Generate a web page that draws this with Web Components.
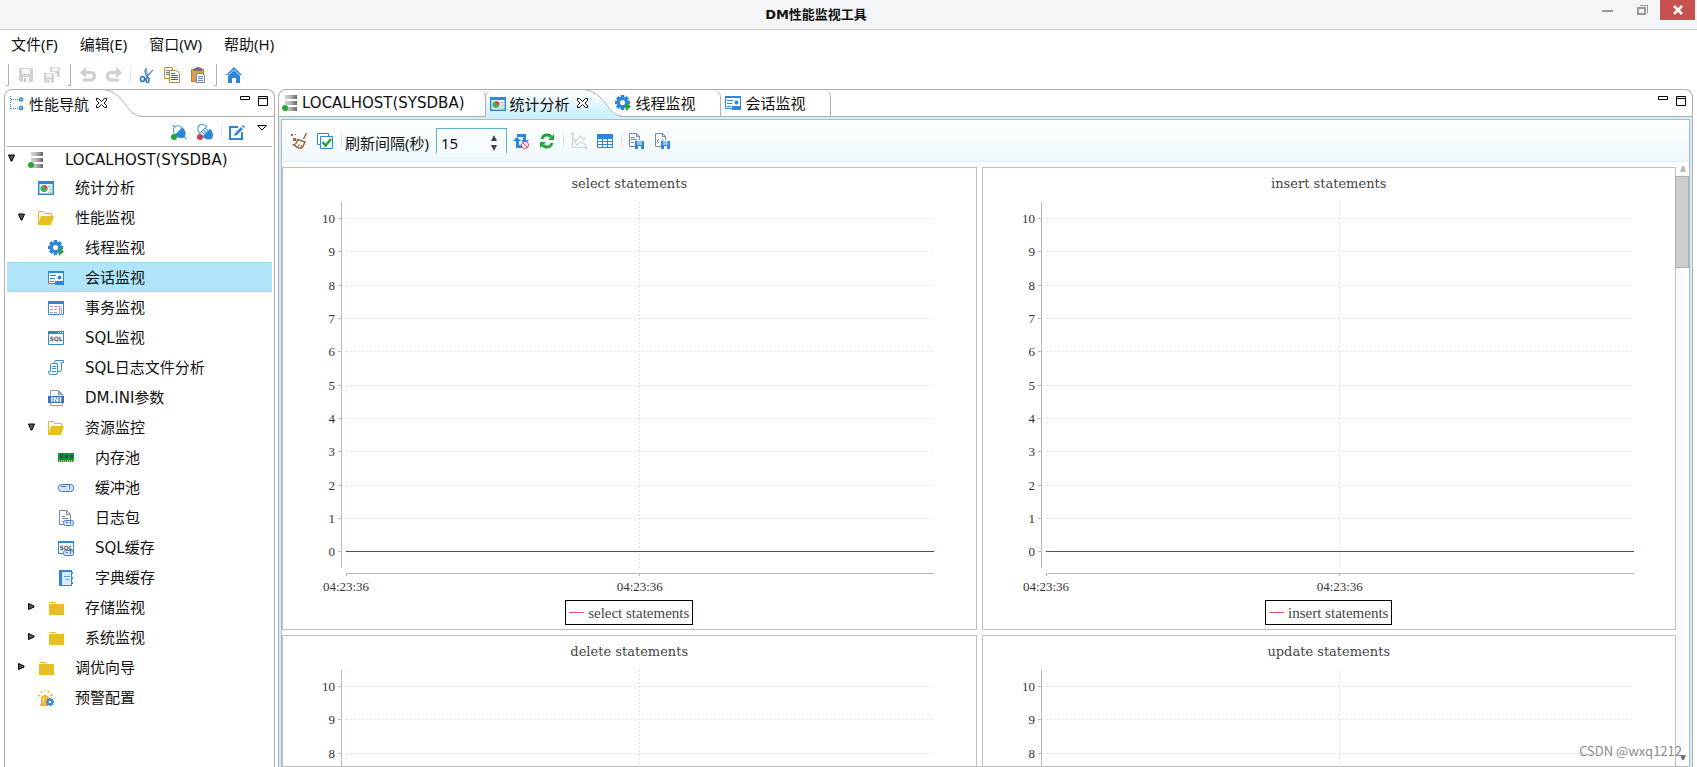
<!DOCTYPE html>
<html lang="zh-CN">
<head>
<meta charset="utf-8">
<title>DM性能监视工具</title>
<style>
  html, body { margin: 0; height: 100%; }
  body {
    font: 15px/30px "Noto Sans", "Noto Sans CJK SC", sans-serif;
    color: #111; background: #fff; overflow: hidden;
    --latin: "DejaVu Sans", "Noto Sans CJK SC", sans-serif;
    --edge: #b0b0b0; --blue: #2f86d8; --frame: #d0effa;
  }
</style>
</head>
<body>
<dm-app></dm-app>
<script>
const RESET = `
  button { font: inherit; color: inherit; background: none; border: 0; padding: 0; margin: 0; display: flex; align-items: center; }
  * { box-sizing: border-box; }
  svg { display: block; }
`;
function define(name, css, html, ready) {
  const t = document.createElement('template');
  customElements.define(name, class extends HTMLElement {
    connectedCallback() {
      if (this.shadowRoot) return;
      const root = this.attachShadow({ mode: 'open' });
      t.innerHTML = `<style>${RESET}${css}</style>${typeof html === 'function' ? html(this) : html}`;
      root.append(t.content.cloneNode(true));
      if (ready) ready(this, root);
    }
  });
}

const server = `<defs><linearGradient id="m"><stop offset="0" stop-color="#d4d4d4"/><stop offset=".4" stop-color="#bbb"/><stop offset="1" stop-color="#666"/></linearGradient></defs>
  <path fill="url(#m)" d="M3 0h12v4H3zM3 6h12v4H3zM3 12h12v4H3z"/><circle cx="3" cy="13" r="3" fill="#23a638"/>`;
const floppy = (x, y, s) => `<g transform="translate(${x} ${y}) scale(${s})"><path fill="#d2d2d2" d="M0 0h14v14H2L0 12z"/><path fill="#f6f6f6" d="M3 1h8v5H3zM4 9h6v5H4z"/><path fill="#c6c6c6" d="M5 10h2v4H5z"/></g>`;
const gear = (cx, cy, r, c) => {
  let s = '';
  for (let i = 0; i < 8; i++) s += `<rect x="${cx - r * .24}" y="${cy - r}" width="${r * .48}" height="${r}" fill="${c}" transform="rotate(${i * 45} ${cx} ${cy})"/>`;
  return s + `<circle cx="${cx}" cy="${cy}" r="${r * .76}" fill="${c}"/><circle cx="${cx}" cy="${cy}" r="${r * .34}" fill="#fff"/>`;
};
const plug = (dot, cut) => `<g transform="translate(8.500 8) rotate(45)">
  <path stroke="#4893da" d="M-10 0h20"/>
  <path fill="#fff" stroke="#4893da" d="M${cut ? -3 : -1}-5A6 5 0 0 0 ${cut ? -3 : -1} 5z"/>
  <path fill="#2f86d8" d="M${cut ? 1 : -1}-5.500A8 5.500 0 0 1 ${cut ? 1 : -1} 5.500z"/>
  ${cut ? '<path stroke="#4893da" d="M-3-2.500h4M-3 2.500h4"/>' : ''}</g><circle cx="3" cy="13" r="3" fill="${dot}"/>`;
const capsule = (x, y, w, h) => `<rect x="${x}" y="${y}" width="${w}" height="${h}" rx="${h / 2.600}" fill="#cfe3ff" stroke="#4b7cc0"/>`;
const docSave = inner => `<path fill="#fff" stroke="#7488ab" d="M6 13.500H.5v-13h7l3 3V7"/><path fill="none" stroke="#7488ab" d="M7.500.5v3h3"/>${inner}<path fill="#2f86d8" d="M6 8h9v8H6z"/><path fill="#8cc4ff" d="M8 8h5v4H8z"/><path fill="#fff" d="M9 13h3v3H9z"/>`;
const win = `<path fill="#fff" stroke="#2f86d8" d="M.5 1.500h15v13H.5z"/><path fill="#2f86d8" d="M0 1h16v3H0z"/>`;
const folder = `<path fill="#fff" stroke="#e5b61f" d="M1.500 2.500h6l1 2"/><path fill="#e7be26" d="M1 4h15v11H1z"/>`;

const ICONS = {
  server,
  stats: `<path fill="#fff" stroke="#2f86d8" stroke-width="1.500" d="M.75 1.750h14.500v12.500H.75z"/><path fill="#2f86d8" d="M0 1h16v3H0z"/><circle cx="6" cy="8.500" r="3.600" fill="#3cb35b"/><path fill="#df3e5c" d="M6 8.500V5a3.500 3.500 0 0 1 3.500 3.500z"/><path stroke="#a5dcae" stroke-width="2" d="M10 6.500h4M11 9.500h3M10 12.500h4"/>`,
  open: `<path fill="#fff" stroke="#e5b61f" d="M.5 14V1.500h5l1 2h7V7"/><path fill="#e7be26" d="M3 6h13l-3 9H0z"/>`,
  folder,
  gear: gear(7.500, 7.500, 7.500, '#2f86d8') + `<path fill="#23a638" d="M11 7l5 4.500-5 4.500z"/>`,
  session: `<path fill="#fff" stroke="#2f86d8" d="M.5 1.500h15v12H.5z"/><path fill="#2f86d8" d="M0 1h16v2H0zM7 11h9v4H7z"/><circle cx="11.500" cy="7.500" r="2" fill="#2f86d8"/><path stroke="#2f86d8" d="M2 5.500h6M2 8.500h5M2 11.500h4"/>`,
  trans: `${win}<path stroke="#c38bd3" stroke-dasharray="3 1" d="M2 6.500h12M2 9.500h8M2 12.500h8"/><path fill="#fff" stroke="#c48bd0" d="M11.500 8.500h2v6h-2z"/>`,
  sql: `<path fill="#fff" stroke="#2f86d8" d="M.5 1.500h15v13H.5z"/><path fill="#2f86d8" d="M0 1h16v3H0z"/><path stroke="#fff" stroke-dasharray="1 1" d="M10 2.500h5"/><text x="8" y="11" text-anchor="middle" font-family="DejaVu Sans" font-weight="bold" font-size="6" fill="#555">SQL</text>`,
  sqllog: `<path fill="#fff" stroke="#3c8bd2" d="M6.500 11.500v-10q0-1 1-1h8v2h-2v7q0 2-2 2z"/><path fill="#fff" stroke="#3c8bd2" d="M2.500 11.500v-7q0-1 1-1h6v9q0 2-2 2h-5q-2 0-2-2v-1z"/><path stroke="#3c8bd2" d="M4 6.500h4M4 8.500h4M4 11.500h4"/>`,
  ini: `<path fill="#fff" stroke="#8b9dbc" d="M2.500 15.500V.5h8l4 4v11z"/><path fill="#8b9dbc" d="M10 0v5h5z"/><path fill="#3c71b2" d="M0 6h16v7H0z"/><text x="8" y="12" text-anchor="middle" font-family="DejaVu Sans" font-weight="bold" font-size="7" fill="#fff">INI</text>`,
  ram: `<path fill="#0a9244" d="M0 3h16v9H0z"/><path fill="#444" d="M2 5h3v3H2zM7 5h3v3H7zM12 5h3v3h-3z"/><path stroke="#d6c53a" stroke-width="2" stroke-dasharray="1 1" d="M1 11h15"/>`,
  buffer: capsule(.5, 4.500, 15, 7) + `<path stroke="#4b7cc0" d="M3 6.500h5M11.500 5v4"/>`,
  logpack: `<path fill="#fff" stroke="#7488ab" d="M1.500 15V.5h7l4 4v6M1.500 14.500H6M8.500.5v4h4"/><path stroke="#7488ab" d="M4 6.500h3M4 8.500h6M4 11.500h3"/>${capsule(5.500, 10.500, 10, 5)}<path stroke="#4b7cc0" d="M8 12.500h2M12.500 11v3"/>`,
  sqlcache: `<path fill="#fff" stroke="#2f86d8" d="M.5 1.500h15v12H.5z"/><path fill="#2f86d8" d="M0 1h16v2H0z"/><text x="8" y="10" text-anchor="middle" font-family="DejaVu Sans" font-weight="bold" font-size="6" fill="#555">SQL</text>${capsule(5.500, 10.500, 10, 5)}<path stroke="#4b7cc0" d="M8 12.500h2M12.500 11v3"/>`,
  dict: `<path fill="#d9eaff" stroke="#2f86d8" d="M1.500 1.500h12v14h-12z"/><path fill="#2f86d8" d="M1 1h3v15H1zM1 0h13v2H1zM14 2h1v2h-1zM14 7h1v2h-1zM14 12h1v2h-1z"/><path stroke="#5c9fe0" d="M6 6.500h6M8 9.500h3"/>`,
  alarm: `<path fill="#f8b52c" d="M3 14V9q0-4 4-4t4 4v5zM2 14h8v2H2z"/><path stroke="#f8b52c" stroke-width="1.500" d="M4 3L3 1M10 3l1-2M2 6L0 5M12 6l3-1.500M7 0v1"/><path stroke="#fff" d="M5.500 13V9q0-1 1-1.500"/>${gear(12, 12, 4, '#2f86d8')}`,
  nav: `<path fill="none" stroke="#2f86d8" stroke-dasharray="1 1" d="M1.500 0v14M2 3.500h7M2 12.500h7"/><path fill="#fff" stroke="#2f86d8" stroke-width="1.500" d="M12 2a1.500 1.500 0 1 1 0 3 1.500 1.500 0 0 1 0-3zM12 10.500a1.500 1.500 0 1 1 0 3 1.500 1.500 0 0 1 0-3z"/>`,
  save: floppy(1, 1, 1),
  saveall: floppy(6, 0, .7) + `<path fill="#fff" d="M0 5h11v11H0z"/>` + floppy(0, 6, .7),
  undo: `<path fill="none" stroke="#cfcfcf" stroke-width="3" d="M3 5.500h8q3.500 0 3.500 3.500T11 13H3"/><path fill="#cfcfcf" d="M0 5.500L6 0v11z"/>`,
  redo: `<path fill="none" stroke="#cfcfcf" stroke-width="3" d="M13 5.500H5Q1.500 5.500 1.500 9T5 13h8"/><path fill="#cfcfcf" d="M16 5.500L10 0v11z"/>`,
  cut: `<path fill="#9dbdd9" stroke="#4b80b4" stroke-width=".8" d="M8 1l1.500 8H8L6.500 4zM15 3L9.500 10l-1-1 5-5z"/><path fill="none" stroke="#3077b8" stroke-width="1.600" d="M4.500 9.500a2 2.500 0 1 1 0 5 2 2.500 0 0 1 0-5zM9.500 10.500a1.500 2.500 0 1 1 0 5 1.500 2.500 0 0 1 0-5z"/>`,
  copy: `<path fill="#fff8df" stroke="#b28c3c" d="M.5.500h8v11h-8z"/><path stroke="#59789c" d="M2 3.500h3M2 5.500h3M2 7.500h3"/><path fill="#fff" stroke="#b28c3c" d="M5.500 3.500h7l3 3v9h-10z"/><path stroke="#3e5f8d" d="M7 6.500h4M7 8.500h7M7 10.500h7M7 12.500h7"/>`,
  paste: `<path fill="#dca04a" stroke="#b77a2a" d="M1.500 2.500h12v12h-12z"/><path fill="#6b7583" d="M4 1h2l1-1h2l1 1h2v3H4z"/><path fill="#fff" stroke="#6f8aa8" d="M6.500 6.500h6l2 2v7h-8z"/><path stroke="#6f8aa8" d="M8 9.500h5M8 11.500h5M8 13.500h5"/>`,
  home: `<path fill="#2f86d8" d="M8 0l8 8H14v8h-4v-5H6v5H2V8H0z"/><path stroke="#fff" stroke-width=".8" fill="none" d="M1.500 9L8 2.800 14.500 9"/>`,
  connect: plug('#23a638'),
  disconnect: plug('#cf3a4e', true),
  edit: `<path fill="none" stroke="#2f86d8" stroke-width="2" d="M9 3H1v12h12V8"/><path fill="#2f86d8" d="M5 12l1-3 6-6 2 2-6 6zM13 2l1-1 2 2-1 1z"/>`,
  broom: `<path fill="none" stroke="#9b6a3f" stroke-width="1.500" d="M15.500 0L12.500 6M6.500 6.500L14 9l-3 6H7.500L2.500 12Q6 11 6.500 6.500z"/><path stroke="#9b6a3f" d="M6.500 14l2-3M9.500 15l1.500-3"/><path fill="#9b6a3f" d="M0 1h2v2H0zM4 1h1v1H4zM2 5h3v3H2z"/>`,
  check: `<path fill="#fff" stroke="#2f86d8" d="M.5.500h11v11H.5z"/><path fill="#fff" stroke="#2f86d8" d="M3.500 3.500h12v12h-12z"/><path fill="none" stroke="#23a638" stroke-width="2.500" d="M5.500 9l3 3.500L14 6"/>`,
  norefresh: `<path fill="#2f86d8" d="M4 1h9v6h3l-4 4-4-4h2V4H4zM0 8l4-4 4 4H6v4h4v3H3V8z"/><circle cx="12" cy="12" r="3.500" fill="#fff" stroke="#df3e5c"/><path stroke="#df3e5c" d="M9.500 9.500l5 5"/>`,
  refresh: `<path fill="none" stroke="#23a638" stroke-width="3" d="M3 6q1-4 5-4 3 0 4 2M13 10q-1 4-5 4-3 0-4-2"/><path fill="#23a638" d="M15 1v6H9zM1 15V9h6z"/>`,
  chart: `<path fill="none" stroke="#d0d5d8" stroke-width="1.200" d="M1.500 0v14.500H16M2 5l3 3 4-5 3 4 3-2M3 8l3 4 4-3 5 3M0 2l1.500-2L3 2M14 13l2 1.500-2 1.500"/>`,
  table: `<path fill="#fff" stroke="#2f86d8" d="M.5 1.500h15v13H.5z"/><path fill="#2f86d8" d="M0 1h16v5H0z"/><path stroke="#2f86d8" d="M0 8.500h16M0 11.500h16M5.500 5v10M10.500 5v10"/>`,
  savedoc: docSave(`<path stroke="#7488ab" d="M2 4.500h4M2 6.500h6M2 9.500h3"/>`),
  savexml: docSave(`<path fill="none" stroke="#7488ab" d="M4 6L2 8l2 2M7 6l1.500 1.500"/>`)
};

define('dm-icon', `:host { display: block; flex: none; width: 16px; height: 16px; } svg { overflow: visible; }`,
  el => `<svg width="16" height="16" viewBox="0 0 16 16" fill="none" aria-hidden="true">${ICONS[el.getAttribute('name')]}</svg>`);

define('dm-tool', `:host { display: block; flex: none; }`,
  el => `<button type="button" aria-label="${el.getAttribute('label')}" ${el.hasAttribute('off') ? 'disabled' : ''}><dm-icon name="${el.getAttribute('icon')}"></dm-icon></button>`);

define('dm-sep', `:host { display: block; flex: none; width: 1px; height: 21px; margin: 0 -3px 0 -2px; background: linear-gradient(#fff, #d4d4d4, #fff); }`, '');
define('dm-handle', `:host { display: block; flex: none; width: 3px; height: 22px; margin: 0 -1px 0 -2px; border: solid var(--edge); border-width: 0 1px 1px 0; }`, '');

define('dm-titlebar', `
  :host { display: flex; height: 30px; background: #f4f5f7; border-bottom: 1px solid #c8c8c8; }
  h1 { flex: 1; margin: 0; padding-left: 42px; font: bold 13px/30px var(--latin); text-align: center; }
  .controls { display: flex; align-items: flex-start; padding-right: 2px; }
  button { width: 35px; height: 20px; justify-content: center; }
  .close { background: #c75050; }`,
  `<h1>DM性能监视工具</h1>
  <div class="controls">
    <button type="button" aria-label="最小化"><svg width="11" height="10"><path fill="#999" d="M0 5h11v2H0z"/></svg></button>
    <button type="button" aria-label="还原"><svg width="11" height="10" fill="none" stroke="#999"><path stroke-width="2" d="M1 3h7v6H1z"/><path d="M3 .5h7.500V8"/></svg></button>
    <button type="button" class="close" aria-label="关闭"><svg width="10" height="10" stroke="#fff" stroke-width="2.500"><path d="M1 1l8 8M9 1l-8 8"/></svg></button>
  </div>`);

define('dm-menubar', `
  :host { display: flex; gap: 22px; padding: 0 11px 2px; height: 30px; }`,
  ['文件(F)', '编辑(E)', '窗口(W)', '帮助(H)'].map(t => `<button type="button">${t}</button>`).join(''));

define('dm-main-toolbar', `
  :host { display: flex; align-items: center; gap: 10px; padding: 0 8px; height: 29px; }`,
  `<dm-handle></dm-handle><dm-tool icon="save" label="保存" off></dm-tool><dm-tool icon="saveall" label="全部保存" off></dm-tool>
  <dm-handle></dm-handle><dm-tool icon="undo" label="撤销" off></dm-tool><dm-tool icon="redo" label="重做" off></dm-tool>
  <dm-sep></dm-sep><dm-tool icon="cut" label="剪切"></dm-tool><dm-tool icon="copy" label="复制"></dm-tool><dm-tool icon="paste" label="粘贴"></dm-tool>
  <dm-handle></dm-handle><dm-tool icon="home" label="主页"></dm-tool>`);

define('dm-tab', `
  :host { display: flex; flex: none; height: 27px; position: relative; }
  button.tab { gap: 5px; height: 26px; padding: 0 24px 0 4px; border-right: 1px solid var(--edge); border-top-right-radius: 7px; white-space: nowrap; }
  :host([latin]) button.tab { gap: 4px; font: 15px/26px var(--latin); padding: 0 20px 0 3px; }
  :host([active]) { margin-right: -14px; }
  :host([active]) button.tab { gap: 4px; height: 27px; padding: 0 7px 0 4px; border: 0; border-radius: 0; background: var(--tab-fill); }
  :host([active][edge]) button.tab { border-left: 1px solid var(--edge); border-top-left-radius: 7px; margin-left: -1px; }
  .x { height: 27px; padding-bottom: 2px; background: var(--tab-fill); z-index: 1; width: 6px; overflow: visible; }
  .x svg { flex: none; }
  .curve { overflow: hidden; }`,
  el => `<button type="button" class="tab" role="tab"><dm-icon name="${el.getAttribute('icon')}"></dm-icon><slot></slot></button>` +
    (el.hasAttribute('active') ? `<button type="button" class="x" aria-label="关闭"><svg width="11" height="10" fill="#fff" stroke="#111"><path d="M.5.500h2l3 3 3-3h2v2l-2.500 2.500 2.500 2.500v2h-2l-3-3-3 3h-2v-2L3 5 .5 2.500z"/></svg></button>
    <svg class="curve" width="42" height="27"><defs><linearGradient id="f" x2="0" y2="1"><stop offset="0" stop-color="#fff"/><stop offset="1" stop-color="${el.hasAttribute('edge') ? '#c9effb' : '#fff'}"/></linearGradient></defs>
    <path fill="url(#f)" d="M0 0c14 1 19 10 25 17 4 6 9 10 17 10H0z"/><path fill="none" stroke="#b0b0b0" d="M0-.5c14 1 19 10 25 17 4 6 9 10 17 10"/></svg>` : ''));

define('dm-panel', `
  :host { display: flex; flex-direction: column; min-width: 0; min-height: 0; border: 1px solid var(--edge); border-bottom: 0; border-radius: 8px 8px 0 0; overflow: hidden; }
  header { display: flex; flex: none; height: 27px; box-shadow: inset 0 -1px var(--edge); }
  .tabs { display: flex; flex: 1; }
  .ctl { display: flex; align-items: flex-start; gap: 8px; padding: 6px 6px 0; }`,
  `<header><div class="tabs" role="tablist"><slot name="tab"></slot></div>
  <div class="ctl">
    <button type="button" aria-label="最小化"><svg width="10" height="10" fill="#fff" stroke="#000"><path d="M.5.500h9v3h-9z"/></svg></button>
    <button type="button" aria-label="最大化"><svg width="10" height="10" fill="#fff" stroke="#000"><path d="M.5.500h9v9h-9zM0 2.500h10"/></svg></button>
  </div></header><slot></slot>`);

define('dm-tree-item', `
  :host { display: block; }
  button { width: 100%; height: 30px; padding: 2px 0 0 calc(1px + 10px * var(--level)); white-space: nowrap; border: solid transparent; border-width: 1px 0; text-align: left; font-family: var(--latin); }
  :host([root]) button { height: 25px; padding-top: 0; }
  :host([selected]) button { background: #b0e5f9; border-color: #9cdcea; }
  .arrow { width: 8px; flex: none; margin-right: 12px; }
  .arrow svg { margin-top: -3px; }
  dm-icon { margin-right: 21px; }`,
  el => {
    const a = el.getAttribute('arrow');
    const d = a === 'open' ? 'M.5 1h6L4 7H3z' : 'M.5.500v6L6 4V3z';
    return `<button type="button" role="treeitem"><span class="arrow">${a ? `<svg width="8" height="8" fill="#555" stroke="#000"><path d="${d}"/></svg>` : ''}</span><dm-icon name="${el.getAttribute('icon')}"></dm-icon><slot></slot></button>`;
  });

const TREE = [
  [0, 'server', 'LOCALHOST(SYSDBA)', 'open'], [1, 'stats', '统计分析'], [1, 'open', '性能监视', 'open'],
  [2, 'gear', '线程监视'], [2, 'session', '会话监视', '', 'selected'], [2, 'trans', '事务监视'], [2, 'sql', 'SQL监视'],
  [2, 'sqllog', 'SQL日志文件分析'], [2, 'ini', 'DM.INI参数'], [2, 'open', '资源监控', 'open'],
  [3, 'ram', '内存池'], [3, 'buffer', '缓冲池'], [3, 'logpack', '日志包'], [3, 'sqlcache', 'SQL缓存'], [3, 'dict', '字典缓存'],
  [2, 'folder', '存储监视', 'closed'], [2, 'folder', '系统监视', 'closed'], [1, 'folder', '调优向导', 'closed'], [1, 'alarm', '预警配置']
];
define('dm-nav', `
  :host { display: block; padding: 0 2px; }
  .tools { display: flex; align-items: center; justify-content: flex-end; gap: 10px; height: 30px; padding-right: 5px; border-bottom: 1px solid var(--edge); }
  .menu { padding-bottom: 8px; margin-left: 2px; }
  .tree { display: block; }`,
  `<div class="tools"><dm-tool icon="connect" label="连接"></dm-tool><dm-tool icon="disconnect" label="断开"></dm-tool><dm-sep></dm-sep><dm-tool icon="edit" label="编辑"></dm-tool>
  <button type="button" class="menu" aria-label="视图菜单"><svg width="10" height="6" fill="#fff" stroke="#000"><path d="M.5.500h9L5 5z"/></svg></button></div>
  <div class="tree" role="tree">${TREE.map(([l, i, t, a, s], n) => `<dm-tree-item style="--level:${l}" icon="${i}" ${a ? `arrow="${a}"` : ''} ${s || ''} ${n ? '' : 'root'}>${t}</dm-tree-item>`).join('')}</div>`);

define('dm-chart', `
  :host { display: flex; flex-direction: column; align-items: center; height: 463px; border: 1px solid #c0c0c0; color: #444; min-width: 0; }
  h2 { margin: 0; height: 34px; font: 13px/32px "DejaVu Serif", serif; }
  .plot { align-self: stretch; margin: 0 42px 0 63px; height: 398px; }
  .plot svg { overflow: visible; font: 13px "Liberation Serif", serif; }
  .legend { display: flex; align-items: center; gap: 4px; height: 25px; padding: 0 3px; border: 1px solid #000; font: 15px/22px "Liberation Serif", serif; }`,
  el => {
    const name = el.getAttribute('name');
    const ys = [16, 49, 83, 116, 149, 183, 216, 249, 283, 316, 349];
    const grid = ys.map(y => `<line x1="0" x2="100%" y1="${y}.5" y2="${y}.5"/>`).join('');
    const ticks = ys.map(y => `<line x1="-8" x2="-5" y1="${y}.5" y2="${y}.5"/>`).join('');
    const labels = ys.map((y, i) => `<text x="-11" y="${y + 5}" text-anchor="end">${10 - i}</text>`).join('');
    return `<h2>${name}</h2>
    <div class="plot"><svg width="100%" height="398" shape-rendering="crispEdges">
      <g stroke="#e4e4e4" stroke-dasharray="2 2">${grid}<line x1="0" x2="0" y1="0" y2="366" stroke="#eee"/><line x1="50%" x2="50%" y1="0" y2="366"/></g>
      <g stroke="#b8b8b8"><line x1="-5" x2="-5" y1="0" y2="366"/>${ticks}<line x1="0" x2="100%" y1="371.500" y2="371.500"/><line x1="0" x2="0" y1="371" y2="374"/><line x1="50%" x2="50%" y1="371" y2="374"/></g>
      <line x1="0" x2="100%" y1="349.500" y2="349.500" stroke="#4a4a9c"/>
      <g fill="#333">${labels}<text x="0" y="389" text-anchor="middle">04:23:36</text><text x="50%" y="389" text-anchor="middle">04:23:36</text></g>
    </svg></div>
    <div class="legend"><svg width="15" height="1"><path stroke="#e05555" d="M0 .5h15"/></svg>${name}</div>`;
  });

define('dm-spin', `
  :host { display: flex; width: 71px; height: 25px; border: 1px solid #5fb0cc; border-bottom: 0; background: #f8fdff; }
  input { width: 100%; min-width: 0; border: 0; background: none; padding: 4px 0 0 4px; font: 15px/20px "Noto Sans", sans-serif; color: #111; outline: 0; }
  div { display: flex; flex-direction: column; justify-content: center; gap: 4px; padding: 4px 9px 0 0; }`,
  `<input id="interval" type="text" inputmode="numeric" value="15" aria-label="刷新间隔(秒)">
  <div><button type="button" aria-label="增加"><svg width="6" height="6" fill="#444"><path d="M3 0l3 6H0z"/></svg></button><button type="button" aria-label="减少"><svg width="6" height="6" fill="#444"><path d="M3 6L0 0h6z"/></svg></button></div>`);

define('dm-scroll', `
  :host { display: flex; flex-direction: column; align-items: center; width: 13px; flex: none; background: linear-gradient(90deg, #f7f7f7, #fff); border-bottom: 1px solid #b8b8b8; padding-bottom: 5px; }
  .up { height: 14px; align-self: stretch; justify-content: center; background: #fff; }
  .thumb { align-self: stretch; height: 92px; margin-left: -1px; background: #cdcdcd; border: 1px solid #b0b0b0; }
  .fill { flex: 1; }`,
  `<button type="button" class="up" aria-label="向上滚动"><svg width="6" height="6" fill="#bbb"><path d="M2 0h2l2 6H0z"/></svg></button>
  <div class="thumb"></div><div class="fill"></div>
  <button type="button" aria-label="向下滚动"><svg width="6" height="6" fill="#777"><path d="M0 0h6L4 5H2z"/></svg></button>`);

define('dm-stats', `
  :host { display: flex; flex: 1; flex-direction: column; min-height: 0; padding: 2px 2px 0; background: var(--frame); }
  .body { display: flex; flex-direction: column; flex: 1; min-height: 0; border: 1px solid #b8b8b8; border-bottom: 0; background: #fff; }
  .tools { display: flex; flex: none; align-items: center; gap: 10px; height: 42px; padding: 0 9px; background: linear-gradient(#fff, #eef8fc); border-bottom: 1px solid #dff1f6; }
  label { margin: 5px -4px 0 -4px; white-space: nowrap; }
  dm-spin { margin: 0 -4px 0 1px; }
  .view { display: flex; flex: 1; min-height: 0; }
  .charts { flex: 1; display: grid; grid-template-columns: 1fr 1fr; grid-auto-rows: 463px; gap: 5px; padding-top: 5px; min-width: 0; overflow: auto; scrollbar-width: none; border-bottom: 1px solid #c0c0c0; }`,
  `<div class="body"><div class="tools">
    <dm-tool icon="broom" label="清除"></dm-tool><dm-tool icon="check" label="选择"></dm-tool><dm-sep></dm-sep>
    <label>刷新间隔(秒)</label><dm-spin></dm-spin>
    <dm-tool icon="norefresh" label="停止刷新"></dm-tool><dm-tool icon="refresh" label="刷新"></dm-tool><dm-sep></dm-sep>
    <dm-tool icon="chart" label="图表" off></dm-tool><dm-tool icon="table" label="表格"></dm-tool><dm-sep></dm-sep>
    <dm-tool icon="savedoc" label="保存文本"></dm-tool><dm-tool icon="savexml" label="保存XML"></dm-tool>
  </div>
  <div class="view"><div class="charts">${['select', 'insert', 'delete', 'update'].map(n => `<dm-chart name="${n} statements"></dm-chart>`).join('')}</div><dm-scroll></dm-scroll></div></div>`,
  (el, root) => root.querySelector('label').addEventListener('click', () => root.querySelector('dm-spin').shadowRoot.querySelector('input').focus()));

define('dm-app', `
  :host { display: flex; flex-direction: column; height: 100vh; position: relative; }
  main { display: grid; grid-template-columns: 271px 1fr; gap: 3px; flex: 1; min-height: 0; padding: 0 4px; }
  .nav { --tab-fill: #fff; }
  .editor { --tab-fill: linear-gradient(#fff, #c9effb); }
  .mark { position: absolute; right: 15px; bottom: 6px; font: 13px/20px "Noto Sans CJK SC", sans-serif; color: #8a8a8a; }`,
  `<dm-titlebar></dm-titlebar><dm-menubar></dm-menubar><dm-main-toolbar></dm-main-toolbar>
  <main>
    <dm-panel class="nav"><dm-tab slot="tab" icon="nav" active>性能导航</dm-tab><dm-nav></dm-nav></dm-panel>
    <dm-panel class="editor">
      <dm-tab slot="tab" icon="server" latin>LOCALHOST(SYSDBA)</dm-tab>
      <dm-tab slot="tab" icon="stats" active edge>统计分析</dm-tab>
      <dm-tab slot="tab" icon="gear">线程监视</dm-tab>
      <dm-tab slot="tab" icon="session">会话监视</dm-tab>
      <dm-stats></dm-stats>
    </dm-panel>
  </main>
  <span class="mark">CSDN @wxq1212</span>`);
</script>
</body>
</html>
